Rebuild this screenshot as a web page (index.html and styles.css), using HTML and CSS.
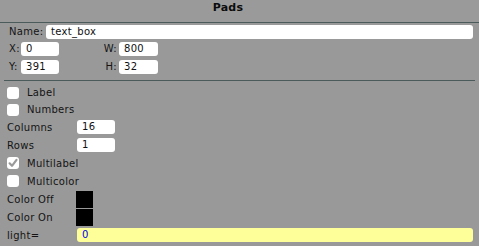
FILE: index.html
```html
<!DOCTYPE html>
<html>
<head>
<meta charset="utf-8">
<link rel="stylesheet" href="styles.css">
</head>
<body>
<div class="panel">
  <div class="title">Pads</div>
  <div class="geom">
    <div class="name-row">
      <span class="lbl">Name:</span>
      <span class="field">text_box</span>
    </div>
    <div class="xywh">
      <span class="lbl">X:</span><span class="field">0</span><span class="lbl r">W:</span><span class="field">800</span>
      <span class="lbl">Y:</span><span class="field">391</span><span class="lbl r">H:</span><span class="field">32</span>
    </div>
  </div>
  <div class="sep"></div>
  <div class="props">
    <div class="row check tight"><span class="box"></span><span>Label</span></div>
    <div class="row check tight"><span class="box"></span><span>Numbers</span></div>
    <div class="row kv"><span>Columns</span><span class="field small">16</span></div>
    <div class="row kv"><span>Rows</span><span class="field small">1</span></div>
    <div class="row check"><span class="box"><svg viewBox="0 0 12 12" width="12" height="12"><path d="M2.6 6.3 L5 8.8 L9.5 2.8" fill="none" stroke="#9a9a9a" stroke-width="2.2" stroke-linecap="round" stroke-linejoin="round"/></svg></span><span>Multilabel</span></div>
    <div class="row check"><span class="box"></span><span>Multicolor</span></div>
    <div class="row kv"><span>Color Off</span><span class="swatch"></span></div>
    <div class="row kv"><span>Color On</span><span class="swatch"></span></div>
    <div class="row kv"><span>light=</span><span class="field code">0</span></div>
  </div>
</div>
</body>
</html>
```

FILE: styles.css
```css
html, body {
  margin: 0;
  padding: 0;
  background: #999999;
}
body {
  width: 479px;
  height: 246px;
  overflow: hidden;
  font-family: "DejaVu Sans", Verdana, sans-serif;
  font-size: 10px;
  letter-spacing: 0.3px;
  color: #141414;
}
.title {
  height: 22px;
  line-height: 16px;
  padding-right: 23px;
  text-align: center;
  font-weight: bold;
  font-size: 11px;
  letter-spacing: 0.2px;
  color: #0c0c0c;
  background: #9b9a9a;
  border-bottom: 1px solid #4b5b5b;
}
.geom {
  padding: 2px 6px 0 9px;
}
.name-row {
  display: grid;
  grid-template-columns: 37px 1fr;
  height: 14px;
  align-items: center;
}
.lbl {
  line-height: 14px;
}
.lbl.r {
  text-align: right;
  padding-right: 2px;
}
.field {
  display: block;
  height: 14px;
  line-height: 14px;
  background: #ffffff;
  border-radius: 3px;
  padding: 0 5px;
  color: #111;
  white-space: nowrap;
  overflow: hidden;
}
.xywh {
  margin-top: 3px;
  display: grid;
  grid-template-columns: 12px 38px 60px 39px;
  grid-auto-rows: 14px;
  row-gap: 4px;
}
.sep {
  margin: 6px 4px 0 4px;
  height: 1px;
  background: #4b5b5b;
}
.props {
  padding: 3px 6px 0 7px;
}
.row {
  height: 18px;
  display: flex;
  align-items: center;
}
.row.tight {
  height: 17px;
}
.check .box {
  width: 12px;
  height: 12px;
  background: #ffffff;
  border-radius: 3px;
  margin-right: 8px;
  display: flex;
}
.kv > span:first-child {
  width: 70px;
  flex: none;
}
.field.small {
  width: 28px;
}
.swatch {
  width: 17px;
  height: 17px;
  background: #000000;
  margin-left: -1px;
}
.field.code {
  flex: 1;
  background: #ffff99;
  color: #0000ee;
}
```
